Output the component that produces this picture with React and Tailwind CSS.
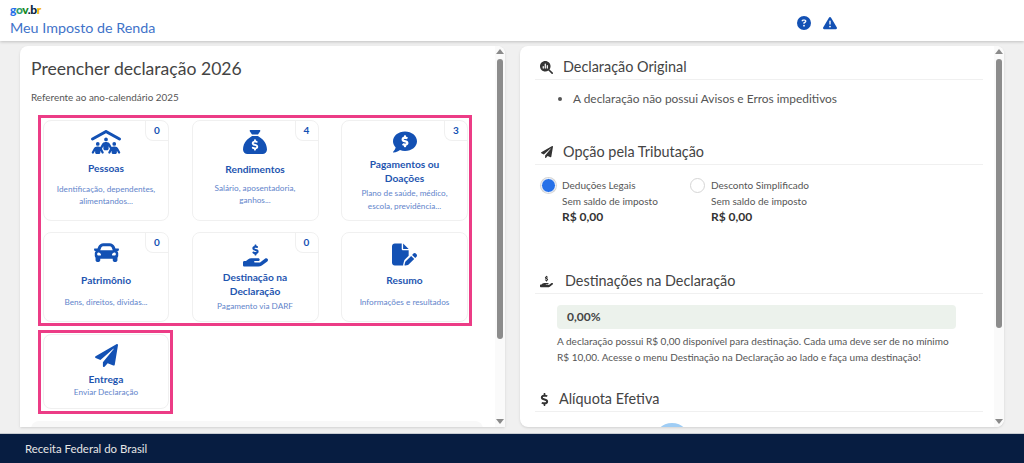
import { FaCommentDollar, FaCar, FaPaperPlane, FaDollarSign } from "react-icons/fa";
import {
  FaPeopleRoof,
  FaSackDollar,
  FaHandHoldingDollar,
  FaFilePen,
  FaCircleQuestion,
  FaTriangleExclamation,
  FaMagnifyingGlassChart,
} from "react-icons/fa6";

const cards = [
  { title: ["Pessoas"], desc: ["Identificação, dependentes,", "alimentandos..."], icon: FaPeopleRoof, size: "text-[30px]", badge: 0, pad: "pt-[6px]", titleGap: "mt-[5px]", descGap: "mt-[7px]" },
  { title: ["Rendimentos"], desc: ["Salário, aposentadoria,", "ganhos..."], icon: FaSackDollar, size: "text-[24px]", badge: 4, pad: "pt-[9px]", titleGap: "mt-[9px]", descGap: "mt-[5px]" },
  { title: ["Pagamentos ou", "Doações"], desc: ["Plano de saúde, médico,", "escola, previdência..."], icon: FaCommentDollar, size: "text-[24px]", badge: 3, pad: "pt-[9px]", titleGap: "mt-[4px]", descGap: "mt-[2px]" },
  { title: ["Patrimônio"], desc: ["Bens, direitos, dívidas..."], icon: FaCar, size: "text-[25px]", badge: 0, pad: "pt-[7px]", titleGap: "mt-[9px]", descGap: "mt-[8px]" },
  { title: ["Destinação na", "Declaração"], desc: ["Pagamento via DARF"], icon: FaHandHoldingDollar, size: "text-[25px]", badge: 0, pad: "pt-[10px]", titleGap: "mt-[3px]", descGap: "mt-[2px]" },
  { title: ["Resumo"], desc: ["Informações e resultados"], icon: FaFilePen, size: "text-[25px]", badge: null, pad: "pt-[9px]", titleGap: "mt-[7px]", descGap: "mt-[8px]" },
];

function Card({ card }) {
  const Icon = card.icon;
  return (
    <div className={`relative bg-white border border-[#f0f0f0] rounded-lg flex flex-col items-center text-center h-full ${card.pad}`}>
      {card.badge !== null && (
        <span className="absolute top-0 right-0 w-[23px] h-[20px] flex items-center justify-center border-l border-b border-[#f0f0f0] rounded-bl-lg text-[10px] font-bold text-[#1351b4]">
          {card.badge}
        </span>
      )}
      <Icon className={`${card.size} text-[#1351b4]`} />
      <div className={`${card.titleGap} text-[10.2px] leading-[13.5px] font-bold text-[#1e55b0]`}>
        {card.title.map((t) => <div key={t}>{t}</div>)}
      </div>
      <div className={`${card.descGap} text-[8.2px] leading-[12.5px] text-[#5f85cb]`}>
        {card.desc.map((t) => <div key={t}>{t}</div>)}
      </div>
    </div>
  );
}

function Scrollbar({ thumb }) {
  return (
    <div className="w-[10px] shrink-0 bg-[#fafafa] flex flex-col items-center pt-[3px] pb-[3px]">
      <div className="w-0 h-0 border-x-[4px] border-x-transparent border-b-[5px] border-b-[#8a8a8a]" />
      <div className={`w-[6px] mt-[5px] rounded-[3px] bg-[#8c8c8c] ${thumb}`} />
      <div className="mt-auto w-0 h-0 border-x-[4px] border-x-transparent border-t-[5px] border-t-[#8a8a8a]" />
    </div>
  );
}

function SectionHead({ icon: Icon, iconSize, textPad, children }) {
  return (
    <div className="flex items-center h-[25px] border-b border-[#f0f0f0]">
      <div className="w-[28px] flex justify-center text-[#333]">
        <Icon className={iconSize} />
      </div>
      <span className={`text-[14.4px] text-[#444] ${textPad}`}>{children}</span>
    </div>
  );
}

function Regime({ label, active, width }) {
  return (
    <div className={`flex gap-[6px] ${width}`}>
      {active ? (
        <span className="mt-[6px] w-[15px] h-[15px] rounded-full bg-[#2670e8] ring-1 ring-[#d5d5d5] border-[1px] border-white" />
      ) : (
        <span className="mt-[6px] w-[15px] h-[15px] rounded-full border border-[#d5d5d5] bg-white" />
      )}
      <div className="text-[#555]">
        <div className="text-[10px] leading-[16px] mt-[5px]">{label}</div>
        <div className="text-[10px] leading-[16px]">Sem saldo de imposto</div>
        <div className="text-[12px] leading-[16px] font-bold text-[#333]">R$ 0,00</div>
      </div>
    </div>
  );
}

export default function App() {
  return (
    <div className="h-[463px] w-[1024px] overflow-hidden flex flex-col bg-[#f0f0f0] font-['Lato',sans-serif]">
      {/* Header */}
      <header className="h-[41px] shrink-0 bg-white shadow-[0_1px_3px_rgba(0,0,0,0.2)] flex justify-between pl-[10px] pr-[187px] z-10">
        <div>
          <div className="text-[12px] leading-[11px] pt-[4px] font-black tracking-[-0.4px]">
            <span className="text-[#2670e8]">g</span>
            <span className="text-[#2e9e6b]">o</span>
            <span className="text-[#168821]">v</span>
            <span className="text-[#071d41]">.</span>
            <span className="text-[#071d41]">b</span>
            <span className="text-[#f5b400]">r</span>
          </div>
          <div className="text-[14.3px] leading-[20px] mt-[3px] text-[#3f73c9]">Meu Imposto de Renda</div>
        </div>
        <div className="flex items-center gap-[12px] pt-[4px] text-[#1351b4]">
          <FaCircleQuestion className="text-[14px]" />
          <FaTriangleExclamation className="text-[14px]" />
        </div>
      </header>

      {/* Panels */}
      <main className="flex-1 flex gap-[15px] pl-[20px] pr-[20px] pt-[5px] pb-[6px] min-h-0">
        <section className="w-[485px] bg-white rounded-t-lg shadow-sm flex overflow-hidden">
          <div className="flex-1 min-w-0 pl-[11px] pt-[11px]">
            <h1 className="text-[17.6px] leading-[24px] text-[#444]">Preencher declaração 2026</h1>
            <p className="mt-[9px] text-[9.9px] leading-[14px] text-[#555]">Referente ao ano-calendário 2025</p>
            <div className="mt-[11px] ml-[7px] w-[434px] h-[211px] border-[3px] border-[#ec3c86] pt-[2px] pl-[2px] grid grid-cols-[126px_127px_127px] gap-x-[22.5px] gap-y-[11px] grid-rows-[101px_90px]">
              {cards.map((card) => (
                <Card key={card.title[0]} card={card} />
              ))}
            </div>
            <div className="mt-[4px] ml-[7px] w-[135px] h-[84px] border-[3px] border-[#ec3c86] p-[1px] pl-[2px]">
              <div className="w-[126px] h-[75px] bg-white border border-[#f0f0f0] rounded-lg flex flex-col items-center text-center pt-[9px]">
                <FaPaperPlane className="text-[23px] text-[#1351b4]" />
                <div className="mt-[5px] text-[10.2px] leading-[14px] font-bold text-[#1e55b0]">Entrega</div>
                <div className="text-[8.2px] leading-[13px] text-[#5f85cb]">Enviar Declaração</div>
              </div>
            </div>
            <div className="mt-[7px] w-[452px] h-[10px] bg-[#f8f8f8] rounded-t-lg" />
          </div>
          <Scrollbar thumb="h-[280px]" />
        </section>

        <section className="w-[484px] bg-white rounded-lg shadow-sm flex overflow-hidden">
          <div className="flex-1 min-w-0 pl-[15px] pr-[11px] pt-[9px] text-[#555]">
            <SectionHead icon={FaMagnifyingGlassChart} iconSize="text-[13px] -ml-[5px]" textPad="">Declaração Original</SectionHead>
            <ul className="mt-[11px] list-disc pl-[38px] text-[11.9px] leading-[16px] text-[#555]">
              <li>A declaração não possui Avisos e Erros impeditivos</li>
            </ul>
            <div className="mt-[33px]">
              <SectionHead icon={FaPaperPlane} iconSize="text-[12px] -ml-[5px]" textPad="">Opção pela Tributação</SectionHead>
            </div>
            <div className="flex mt-[7px] pl-[6px] h-[60px]">
              <Regime label="Deduções Legais" active width="w-[149px]" />
              <Regime label="Desconto Simplificado" width="w-[160px]" />
            </div>
            <div className="mt-[37px]">
              <SectionHead icon={FaHandHoldingDollar} iconSize="text-[13px] -ml-[5px]" textPad="ml-[2px]">Destinações na Declaração</SectionHead>
            </div>
            <div className="mt-[11px] ml-[22px] w-[399px] h-[24px] rounded bg-[#ecf2ec] pl-[10px] flex items-center text-[12px] font-bold text-[#444]">0,00%</div>
            <div className="mt-[4px] ml-[22px] w-[420px] text-[10px] leading-[16px] text-[#555]">
              <div>A declaração possui R$ 0,00 disponível para destinação. Cada uma deve ser de no mínimo</div>
              <div>R$ 10,00. Acesse o menu Destinação na Declaração ao lado e faça uma destinação!</div>
            </div>
            <div className="mt-[22px]">
              <SectionHead icon={FaDollarSign} iconSize="text-[13px] -ml-[10px]" textPad="-ml-[4px]">Alíquota Efetiva</SectionHead>
            </div>
            <div className="mt-[11px] ml-[119px] w-[36px] h-[36px] rounded-full bg-[#9fcdf5]" />
          </div>
          <Scrollbar thumb="h-[269px]" />
        </section>
      </main>

      {/* Footer */}
      <footer className="h-[30px] shrink-0 bg-[#071d41] border-t border-[#c8ccd2] pl-[25px] flex items-center text-[11.4px] text-[#e6e6e6]">
        Receita Federal do Brasil
      </footer>
    </div>
  );
}
